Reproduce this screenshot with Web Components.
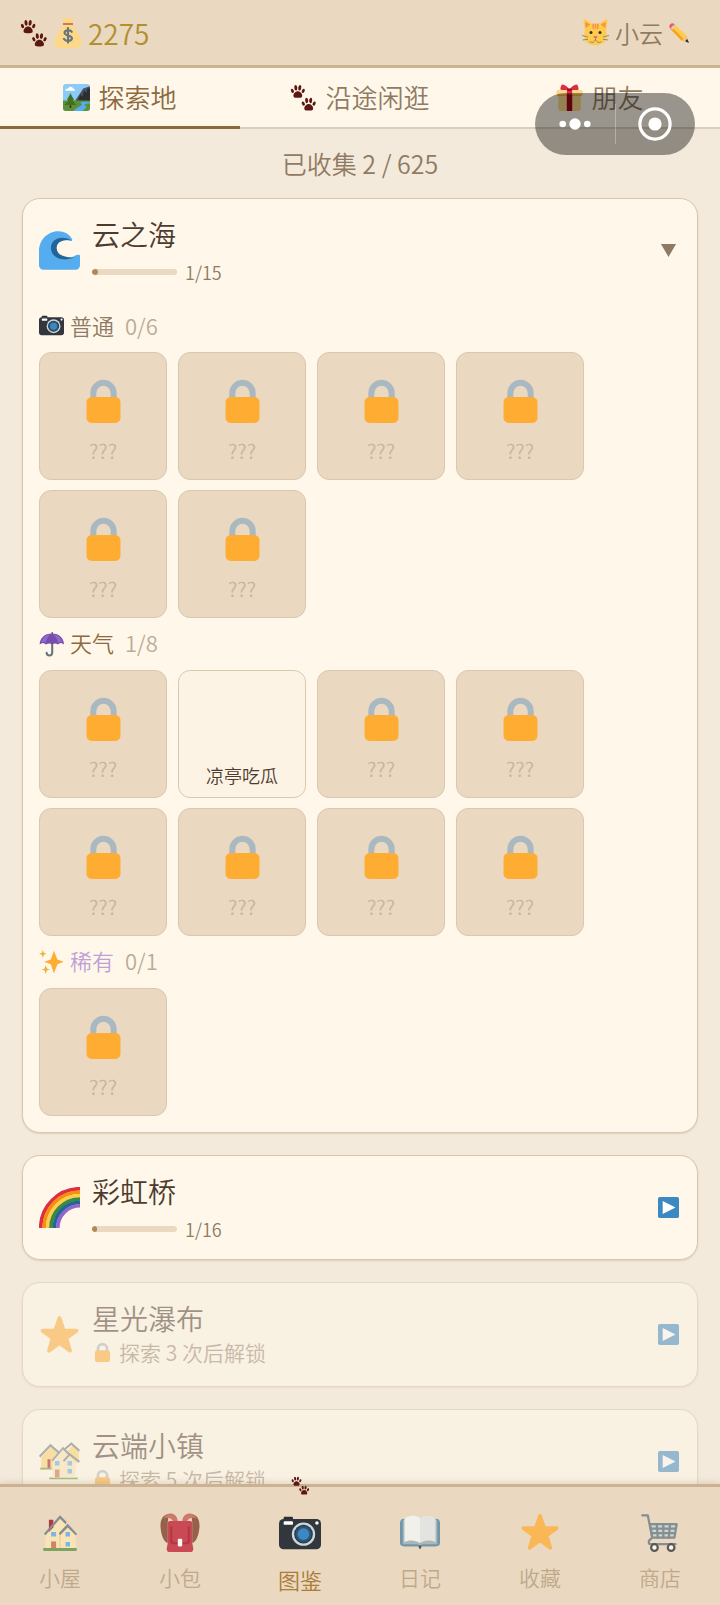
<!DOCTYPE html>
<html lang="zh-CN">
<head>
<meta charset="utf-8">
<meta name="viewport" content="width=device-width, initial-scale=1">
<title>图鉴</title>
<style>
  :root {
    --page: #f4eadb;
    --bar: #ead9c0;
    --line: #cbb391;
    --card: #fff8ea;
    --edge: #d6c7ae;
    --ink: #4e3b30;
    --muted: #8f7b63;
    --faint: #bbab96;
    --brown: #8d6a3c;
  }
  html, body { height: 100%; }
  body {
    margin: 0;
    background: var(--page);
    color: var(--ink);
    font-family: "Noto Sans CJK SC", "Noto Sans", sans-serif;
    font-weight: 350;
  }
</style>
</head>
<body>
<atlas-app></atlas-app>

<script>
const PAW = '<path d="M9.700 10.800c2.600 0 5 2.600 5 4.900 0 2.600-2.400 2.300-5 2.300s-5 .3-5-2.300c0-2.300 2.400-4.900 5-4.900z"/><ellipse cx="3.600" cy="10.200" rx="1.600" ry="2.500" transform="rotate(-25 3.600 10.200)"/><ellipse cx="7.400" cy="6.800" rx="1.700" ry="3.100" transform="rotate(-6 7.400 6.800)"/><ellipse cx="11.900" cy="6.800" rx="1.700" ry="3.100" transform="rotate(8 11.900 6.800)"/><ellipse cx="15.800" cy="10.200" rx="1.600" ry="2.500" transform="rotate(25 15.800 10.200)"/>';
const HOUSE = '<path fill="#ffe8b6" d="M5 33.500V20L18 5.500 31 20v13.500z"/><path fill="#a0041e" d="M8 7h4v7l-4 4z"/><path fill="#66757f" d="M3.500 19.500 18 3l6 6-1 2-5-5L5 21z"/><path fill="#ffe8b6" d="M18 34V19l7-7 7 7v15z"/><path fill="#f4c37f" d="M17.500 19h1v15h-1z"/><path fill="#66757f" d="M17 19 25 10.500 33.500 20 32 21l-7-7-7 7z"/><path fill="#c1694f" d="M10 26.500h4.500V34H10z"/><path fill="#55acee" d="M10 18h4.500v4H10zm13 0h4v4h-4zm0 9h4v4h-4z"/>';
const ICONS = {
  paws: `<g fill="#5c1713"><g transform="translate(-1 -3) scale(1.18)">${PAW}</g><g transform="translate(13.500 14) scale(1.180)">${PAW}</g></g>`,
  money: '<path fill="#fdd888" d="M33 24c-1.800-5-5-9-8-12.500L23 8H13l-2 3.500C8 15 5 19 3 24-.5 33 4 36 8 36h20c4 0 8.500-3 5-12z"/><path fill="#fdd888" d="M11 .5c4-1 10-1 14 0L23 7H13z"/><path fill="#bf6952" d="M12 6.200h12v2H12z"/><path fill="none" stroke="#67757f" stroke-width="2.600" stroke-linecap="round" d="M22.500 16.500c-1-1.800-8-2.800-8.600 1.200-.5 4 9.200 2.500 8.800 6.800-.5 4-8 3.500-9.500.7M18 12v17.500"/>',
  park: '<rect width="36" height="36" rx="4" fill="#8ccaf7"/><path fill="#fff" d="M3 9c0-3 4-3 4-3s1-3 4-2 2 2 2 2 3 0 3 3z"/><path fill="#4b545d" d="M15 24 27 6l9-3v21z"/><path fill="#292f33" d="m20 22 3-8 3 3 2-9 3 4 2-7 3 2v16z"/><path fill="#5c913b" d="M0 22h36v10a4 4 0 0 1-4 4H4a4 4 0 0 1-4-4z"/><path fill="#55acee" d="M36 24c-9-1-14 0-12 2s2 2-2 4-7 4-8 6h12c4-4 7-5 4-7s0-3 6-3z"/><path fill="#3e721d" d="M10 12c-2 5-3 6-5 9h2c-1 3-3 5-5 7h16c-2-2-4-4-5-7h2c-2-3-3-4-5-9z"/><path fill="#662113" d="M9 28h2v4H9z"/>',
  gift: '<path fill="#fdd888" d="M3 14h30v18a4 4 0 0 1-4 4H7a4 4 0 0 1-4-4z"/><rect x="1" y="8" width="34" height="8" rx="2" fill="#fcab40"/><rect x="1" y="8" width="34" height="6" rx="2" fill="#fdd888"/><path fill="#dd2e44" d="M14.500 8h7v28h-7zM18 8C15 2 8-1 7 2s-2 5 0 6zM18 8c3-6 10-9 11-6s2 5 0 6z"/><path fill="#a0041e" d="M14.500 14h7v22h-7zM15 6h6v3h-6z"/>',
  cat: '<path fill="#ffcb4d" d="M2 3C2 0 5 0 7 2l7 5h8l7-5c2-2 5-2 5 1l-2 13c2 5 3 19-14 19S2 22 4 16z"/><path fill="#f79348" d="m4 4 1 8 6-5zm28 0-1 8-6-5zM14 6h2v7h-2zm3 0h2v7h-2zm3 0h2v7h-2z"/><circle cx="12" cy="18" r="2" fill="#292f33"/><circle cx="24" cy="18" r="2" fill="#292f33"/><path fill="#e75a70" d="M15 23h6l-3 4z"/><path fill="none" stroke="#66757f" d="M10 30c4 3 7 0 8-3 1 3 4 6 8 3M0 22l8 2m28-2-8 2M1 28l7-1m27 1-7-1"/>',
  pencil: '<path fill="#ea596e" d="M1 8c-2-4 3-9 7-7l4 4-7 8z"/><path fill="#ccd6dd" d="M9 3 3 9l3 3 6-6z"/><path fill="#ffcc4d" d="m12 4 20 19-9 9L4 13z"/><path fill="#f9a01f" d="m8 10 18 19-3 3L5 13z"/><path fill="#eac083" d="m32 23 4 13-13-4z"/><path fill="#292f33" d="m33 29 3 7-7-3z"/>',
  wave: '<path fill="#55acee" d="M36 22.500c0-.8-3-1-4-.2-7 4.700-17 .7-17-6.300 0-5 5-9 12-6.500 1.500.6 2.600.2 2-1.500C27 3.500 22 1 17 1 9 1 0 7 0 19v12a4 4 0 0 0 4 4h28a4 4 0 0 0 4-4z"/><path fill="#269" d="M28 9C19 4 10.500 8.500 10.500 15.500c0 9 10.500 13 20.500 8.500-8 .5-15.500-2-15.500-8.500 0-5 6-7.500 12.500-6.500z"/>',
  camera: '<path fill="#292f33" d="M4 5q0-1 1-1h6q1 0 1 1v2H4z"/><rect y="6" width="36" height="26" rx="4" fill="#31373d"/><circle cx="21" cy="19" r="10" fill="#ccd6dd"/><circle cx="21" cy="19" r="8" fill="#31373d"/><circle cx="21" cy="19" r="7" fill="#2a5578"/><circle cx="21" cy="19" r="5" fill="#3b88c3"/><rect x="4" y="8" width="8" height="3" rx="1" fill="#fff"/><circle cx="32.500" cy="9.500" r="1.500" fill="#fff"/>',
  umbrella: '<path fill="none" stroke="#66757f" stroke-width="3" stroke-linecap="round" d="M19 17v13c0 5-8 5-8 0"/><path fill="#744eaa" d="M18 2C8 2 1 9 1 18c3-3 6-3 9 0 3-2 6-2 9 0 3-2 6-2 8 0 3-3 6-3 9 0C36 9 29 2 19 2z"/><path fill="#9266cc" d="M17 3C9 4 5 9 3 15c3-1 5-1 7 1 0-5 3-10 7-13zm3 0c8 1 12 6 14 12-3-1-5-1-7 1 0-5-3-10-7-13z"/><path fill="#744eaa" d="M18 0h2v4h-2z"/>',
  sparkles: '<path fill="#ffac33" d="m35.500 17-9-3.500L21.500 1l-4.500 12.500L7.500 17l9.500 3.500L21.500 34l5-13.500z"/><path fill="#e5b644" d="m11 5.500-4-1.500L5.500 0 4 4 0 5.500 4 7l1.500 4.500L7 7zm4.500 22.500-4-1.500L9.500 22l-1.500 4.500L4 28l4 1.500L9.500 35l2-5.500z"/>',
  lock: '<path fill="none" stroke="#aab8c2" stroke-width="4.600" d="M10.200 18v-5a7.800 7.800 0 0 1 15.600 0v5"/><path fill="#ffac33" d="M31 32c0 2.209-1.791 4-4 4H9c-2.209 0-4-1.791-4-4V20c0-2.209 1.791-4 4-4h18c2.209 0 4 1.791 4 4z"/>',
  rainbow: '<g fill="none" stroke-width="3.200"><path stroke="#dd2e44" d="M1.500 36A34.500 34.500 0 0 1 36 1.500"/><path stroke="#f4900c" d="M4.500 36A31.500 31.500 0 0 1 36 4.500"/><path stroke="#ffcc4d" d="M7.500 36A28.500 28.500 0 0 1 36 7.500"/><path stroke="#3e8a3b" d="M10.500 36A25.500 25.500 0 0 1 36 10.500"/><path stroke="#269" d="M13.500 36A22.500 22.500 0 0 1 36 13.500"/><path stroke="#9266cc" d="M16.500 36A19.500 19.500 0 0 1 36 16.500"/></g>',
  star: '<path fill="#ffac33" stroke="#ffac33" stroke-width="3.400" stroke-linejoin="round" d="m18 3.500 3.700 11 11.200.1-9 6.600 3.300 11L18 25.500l-9.200 6.700 3.300-11-9-6.600 11.200-.1z"/>',
  town: '<path fill="#ffd469" d="M2 14 11 4l9 9v12H2zm22-4 6-7 5 7v9H24z"/><path fill="#66757f" d="M0 13 10 2.500l8 7-1 1.500-7-6-9 9.500zm22-6.500 6.500-5.500L36 8l-1 1.500-6.500-6L23 8z"/><path fill="#a0041e" d="M7.500 16H10v8H7.500z"/><path fill="#5c913b" d="M1 23.500h10V25H1zm8 8.500h25v1.500H9z"/><path fill="#ffe8b6" d="M12 32V17l9-10 5 5 6 7v13z"/><path fill="#66757f" d="m11 17 10-12 6 6-1 1.500-5-5-9 10.500zm10 0 6-6.500 9 7-1 1.500-8-6-5 5.500z"/><path fill="#c1694f" d="M14 25h4v7h-4z"/><path fill="#55acee" d="M14 17.500h4v4h-4zm11 0h4v4h-4zm0 7h4v4h-4z"/>',
  house: HOUSE + '<path fill="#5c913b" d="M3 32.500h30V35H3z"/>',
  backpack: '<path fill="#7a3a25" d="M8 2C2 2 0 8 .5 14c.5 7 3 13 6.500 14V9zm20 0c6 0 8 6 7.500 12-.5 7-3 13-6.500 14V9z"/><path fill="#c1594f" d="M5 3c4-3 10-2 11 5l-4 3c0-5-4-7-9-5zm26 0c-4-3-10-2-11 5l4 3c0-5 4-7 9-5z"/><path fill="#be1931" d="M7 10q0-2 2-2h18q2 0 2 2v18l1 5q0 3-3 3H9q-3 0-3-3l1-5z"/><path fill="#a0041e" d="M9 13h2v12q0 2 2 2h10q2 0 2-2V13h2v13q0 3-3 3H12q-3 0-3-3z"/><rect x="16" y="24" width="4" height="7" rx="1" fill="#fff"/>',
  book: '<path fill="#4383a3" d="M4 6h28q4 0 4 4v18q0 3-4 3H20q-2 2-4 0H4q-4 0-4-3V10q0-4 4-4z"/><path fill="#99aab5" d="M2.500 7h31v22H20l-2 2-2-2H2.500z"/><path fill="#f5f8fa" d="M18 5.500C14 2.500 8 3 4 6v21c4-2 10-2 14 1z"/><path fill="#e1e8ed" d="M18 5.500c4-3 10-2.500 14 .5v21c-4-2-10-2-14 1z"/><path fill="#292f33" d="M17 30h2v3h-2z"/>',
  cart: '<g fill="none" stroke="#66757f" stroke-width="2" stroke-linecap="round" stroke-linejoin="round"><path fill="#bdd5e3" d="M9 11h24l-2 12H11z"/><path d="M2 3h5l4 20-3 3v2q0 1 2 1h22M10 15h22M10.500 19H31M15 11l1 12m5-12v12m6-12-1 12"/></g><circle cx="13" cy="32" r="3" fill="#fff" stroke="#292f33" stroke-width="2"/><circle cx="28" cy="32" r="3" fill="#fff" stroke="#292f33" stroke-width="2"/>',
  play: '<rect width="36" height="36" rx="3" fill="#3b88c3"/><path fill="#fff" d="M8 7v22l22-11z"/>',
  down: '<path fill="#8f7b63" d="M5 7h26L18 29z"/>',
  more: '<g fill="#fff"><circle cx="5" cy="18" r="3.500"/><circle cx="18" cy="18" r="6"/><circle cx="31" cy="18" r="3.500"/></g>',
  target: '<circle cx="18" cy="18" r="16" fill="none" stroke="#fff" stroke-width="3.400"/><circle cx="18" cy="18" r="7" fill="#fff"/>'
};

function shadow(el, html) {
  const t = document.createElement('template');
  t.innerHTML = html;
  el.attachShadow({ mode: 'open' }).append(t.content.cloneNode(true));
}
const BUTTON_RESET = `button { appearance: none; margin: 0; padding: 0; border: 0; background: none; color: inherit; font: inherit; cursor: pointer; }`;

customElements.define('game-icon', class extends HTMLElement {
  constructor() {
    super();
    shadow(this, `<style>
      :host { display: block; flex: none; width: var(--size, 24px); height: var(--size, 24px); }
      svg { display: block; width: 100%; height: 100%; }
    </style><svg viewBox="0 0 36 36" aria-hidden="true">${ICONS[this.getAttribute('name')]}</svg>`);
  }
});

customElements.define('status-bar', class extends HTMLElement {
  constructor() {
    super();
    shadow(this, `<style>${BUTTON_RESET}
      :host { display: flex; align-items: center; justify-content: space-between; height: 65px; padding: 0 31px 0 20px; background: var(--bar); border-bottom: 3px solid var(--line); }
      .coins, .user { display: flex; align-items: center; }
      .coins { gap: 5px; font-size: 28px; line-height: 40px; color: #b0902f; }
      .coins game-icon { --size: 28px; }
      .coins .money { --size: 30px; }
      .user { gap: 6px; font-size: 24px; line-height: 36px; color: var(--muted); }
      .user game-icon { --size: 27px; }
      .user .pencil { --size: 20px; }
    </style>
    <div class="coins"><game-icon name="paws"></game-icon><game-icon class="money" name="money"></game-icon><span>2275</span></div>
    <button class="user" aria-label="修改昵称"><game-icon name="cat"></game-icon><span>小云</span><game-icon class="pencil" name="pencil"></game-icon></button>`);
  }
});

customElements.define('top-tab', class extends HTMLElement {
  constructor() {
    super();
    shadow(this, `<style>${BUTTON_RESET}
      :host { display: block; color: var(--muted); margin-bottom: -2px; }
      :host([active]) { color: var(--brown); }
      button { display: flex; align-items: center; justify-content: center; gap: 8px; box-sizing: border-box; width: 100%; height: 61px; border-bottom: 3px solid transparent; font-size: 26px; line-height: 38px; }
      :host([active]) button { border-color: var(--brown); }
      game-icon { --size: 27px; }
    </style><button role="tab" aria-selected="${this.hasAttribute('active')}"><game-icon name="${this.getAttribute('icon')}"></game-icon><span><slot></slot></span></button>`);
  }
});

customElements.define('mini-capsule', class extends HTMLElement {
  constructor() {
    super();
    shadow(this, `<style>${BUTTON_RESET}
      :host { display: flex; align-items: center; width: 160px; height: 62px; border-radius: 31px; background: rgba(0, 0, 0, .4); }
      button { flex: 1; display: flex; justify-content: center; }
      game-icon { --size: 34px; }
      i { width: 1px; height: 40px; background: rgba(255, 255, 255, .3); }
    </style><button aria-label="更多"><game-icon name="more"></game-icon></button><i></i><button aria-label="关闭"><game-icon name="target"></game-icon></button>`);
  }
});

customElements.define('photo-tile', class extends HTMLElement {
  constructor() {
    super();
    const open = this.hasAttribute('unlocked');
    shadow(this, `<style>
      :host { display: flex; flex-direction: column; align-items: center; justify-content: space-between; box-sizing: border-box; height: 128px; padding: 23px 4px 16px; border: 1px solid #d9c8ae; border-radius: 12px; background: var(--bar); color: #c7b69c; font-size: 20px; line-height: 24px; }
      :host([unlocked]) { justify-content: flex-end; padding-bottom: 10px; background: #fcf3e4; color: var(--ink); font-size: 18px; }
      game-icon { --size: 47px; }
    </style>${open ? '' : '<game-icon name="lock"></game-icon>'}<span><slot>???</slot></span>`);
  }
});

customElements.define('photo-group', class extends HTMLElement {
  constructor() {
    super();
    shadow(this, `<style>
      :host { display: block; }
      h3 { display: flex; align-items: center; gap: 6px; height: 52px; margin: 0; font-size: 22px; line-height: 28px; font-weight: inherit; color: var(--tone, var(--muted)); }
      :host(:first-of-type) h3 { height: 50px; }
      game-icon { --size: 25px; }
      span, small { padding-bottom: 4px; }
      :host(:first-of-type) game-icon { margin-bottom: 4px; }
      small { margin-left: 5px; font-size: 22px; color: var(--faint); }
      div { display: grid; grid-template-columns: repeat(auto-fill, 128px); gap: 10px 11px; max-width: 560px; }
    </style>
    <h3><game-icon name="${this.getAttribute('icon')}"></game-icon><span>${this.getAttribute('label')}</span><small>${this.getAttribute('count')}</small></h3>
    <div><slot></slot></div>`);
  }
});

customElements.define('place-card', class extends HTMLElement {
  constructor() {
    super();
    const locked = this.hasAttribute('locked');
    const open = this.hasAttribute('open');
    const [done, total] = (this.getAttribute('progress') || '0/1').split('/');
    const detail = locked
      ? `<span class="lock"><game-icon name="lock"></game-icon><span>${this.getAttribute('locked')}</span></span>`
      : `<span class="progress"><span class="track"><span class="fill" style="width:${done / total * 100}%"></span></span><span>${done}/${total}</span></span>`;
    shadow(this, `<style>${BUTTON_RESET}
      :host { display: block; border: 1px solid var(--edge); border-radius: 18px; background: var(--card); box-shadow: 0 1px 2px rgba(140, 110, 70, .2); }
      :host([locked]) { opacity: .5; }
      h2 { margin: 0; font: inherit; }
      button { display: flex; align-items: center; gap: 12px; width: 100%; min-height: 103px; padding: 0 18px 0 16px; box-sizing: border-box; text-align: left; }
      .icon { --size: 41px; }
      .arrow { --size: 21px; }
      .text { flex: 1; }
      .name { display: block; font-size: 28px; line-height: 36px; }
      .progress, .lock { display: flex; align-items: center; line-height: 24px; }
      .progress { gap: 8px; margin: 8px 0 2px; font-size: 18px; color: var(--muted); }
      .lock { gap: 6px; margin: 4px 0 6px; font-size: 21px; color: #9c8a75; }
      .lock game-icon { --size: 21px; }
      .track { width: 85px; height: 6px; border-radius: 3px; background: var(--bar); overflow: hidden; }
      .fill { display: block; height: 100%; border-radius: 3px; background: #b18a52; }
      .body { padding: 0 16px 16px; }
    </style>
    <h2><button aria-expanded="${open}">
      <game-icon class="icon" name="${this.getAttribute('icon')}"></game-icon>
      <span class="text"><span class="name">${this.getAttribute('name')}</span>${detail}</span>
      <game-icon class="arrow" name="${open ? 'down' : 'play'}"></game-icon>
    </button></h2>${open ? '<div class="body"><slot></slot></div>' : ''}`);
  }
});

customElements.define('nav-item', class extends HTMLElement {
  constructor() {
    super();
    const active = this.hasAttribute('active');
    shadow(this, `<style>
      :host { display: block; }
      a { position: relative; display: flex; flex-direction: column; align-items: center; gap: 10px; padding-top: 25px; color: #bea98b; font-size: 21px; line-height: 30px; text-decoration: none; }
      game-icon { --size: 40px; opacity: .75; }
      :host([active]) a { color: #ab7c38; font-size: 22px; }
      :host([active]) game-icon { --size: 42px; opacity: 1; }
      :host([active]) .mark { --size: 19px; position: absolute; top: -11px; left: calc(50% - 9px); }
    </style><a href="#" ${active ? 'aria-current="page"' : ''}>${active ? '<game-icon class="mark" name="paws"></game-icon>' : ''}<game-icon name="${this.getAttribute('icon')}"></game-icon><span><slot></slot></span></a>`);
  }
});

customElements.define('atlas-app', class extends HTMLElement {
  constructor() {
    super();
    const tiles = n => '<photo-tile></photo-tile>'.repeat(n);
    shadow(this, `<style>
      :host { display: flex; flex-direction: column; height: 100vh; position: relative; }
      .tabs { display: grid; grid-template-columns: repeat(3, 1fr); background: var(--card); border-bottom: 2px solid #dccfb9; }
      mini-capsule { position: absolute; top: 93px; right: 25px; z-index: 2; }
      main { flex: 1; min-height: 0; overflow-y: auto; scrollbar-width: none; padding: 0 22px; }
      .total { margin: 0; padding: 16px 0 17px; font-size: 25px; line-height: 36px; text-align: center; color: var(--muted); }
      .list { display: flex; flex-direction: column; gap: 22px; padding-bottom: 22px; }
      nav { position: relative; display: grid; grid-template-columns: repeat(6, 1fr); height: 118px; background: var(--bar); border-top: 3px solid var(--line); box-shadow: 0 -2px 6px rgba(140, 110, 70, .2); }
    </style>
    <status-bar></status-bar>
    <div class="tabs" role="tablist">
      <top-tab icon="park" active>探索地</top-tab>
      <top-tab icon="paws">沿途闲逛</top-tab>
      <top-tab icon="gift">朋友</top-tab>
    </div>
    <mini-capsule></mini-capsule>
    <main>
      <p class="total">已收集 2 / 625</p>
      <div class="list">
        <place-card icon="wave" name="云之海" progress="1/15" open>
          <photo-group icon="camera" label="普通" count="0/6">${tiles(6)}</photo-group>
          <photo-group icon="umbrella" label="天气" count="1/8" style="--tone:#8d6a3c">${tiles(1)}<photo-tile unlocked>凉亭吃瓜</photo-tile>${tiles(6)}</photo-group>
          <photo-group icon="sparkles" label="稀有" count="0/1" style="--tone:#bf9fd6">${tiles(1)}</photo-group>
        </place-card>
        <place-card icon="rainbow" name="彩虹桥" progress="1/16"></place-card>
        <place-card icon="star" name="星光瀑布" locked="探索 3 次后解锁"></place-card>
        <place-card icon="town" name="云端小镇" locked="探索 5 次后解锁"></place-card>
      </div>
    </main>
    <nav>
      <nav-item icon="house">小屋</nav-item>
      <nav-item icon="backpack">小包</nav-item>
      <nav-item icon="camera" active>图鉴</nav-item>
      <nav-item icon="book">日记</nav-item>
      <nav-item icon="star">收藏</nav-item>
      <nav-item icon="cart">商店</nav-item>
    </nav>`);
  }
});
</script>
</body>
</html>
